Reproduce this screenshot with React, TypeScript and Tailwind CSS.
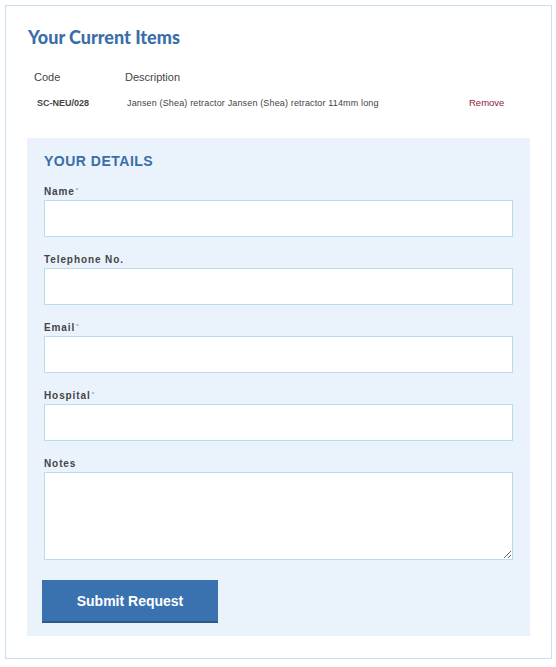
import React from 'react';

interface FieldProps {
  label: string;
  required?: boolean;
  multiline?: boolean;
}

const Field: React.FC<FieldProps> = ({ label, required, multiline }) => (
  <div className="mb-[14px]">
    <label className="block text-[10px] leading-[17px] font-bold tracking-[0.9px] text-[#454545]">
      {label}
      {required && <sup className="text-[6px] text-[#9a9a9a] ml-[1px]">*</sup>}
    </label>
    {multiline ? (
      <textarea className="block w-full h-[88px] bg-white border border-[#b7dcee] outline-none resize-y" />
    ) : (
      <input type="text" className="block w-full h-[37px] bg-white border border-[#b7dcee] outline-none" />
    )}
  </div>
);

export default function App() {
  return (
    <div className="bg-white w-[556px] h-[667px] pt-[5px] pl-[5px]" style={{ fontFamily: '"Liberation Sans", Arial, sans-serif' }}>
      <div className="w-[547px] h-[654px] border border-[#c7e0ef] pt-[19px]">
        {/* Current items */}
        <h2
          className="pl-[22px] text-[18px] leading-[24px] font-black text-[#3a6ea8]"
          style={{ fontFamily: 'Lato, "Liberation Sans", sans-serif' }}
        >
          Your Current Items
        </h2>

        <div className="mt-[21px] flex pl-[28px] text-[11px] leading-[14px] text-[#444]">
          <div className="w-[91px]">Code</div>
          <div>Description</div>
        </div>

        <div className="mt-[13px] flex items-center pl-[31px] text-[9px] leading-[12px] text-[#444]">
          <div className="w-[90px] font-bold">SC-NEU/028</div>
          <div className="w-[342px] tracking-[0.15px]">Jansen (Shea) retractor Jansen (Shea) retractor 114mm long</div>
          <div className="text-[#8b1c3c] text-[9.5px]">Remove</div>
        </div>

        {/* Details form */}
        <div className="mt-[29px] ml-[21px] w-[503px] bg-[#eaf3fc] pt-[14px] pl-[17px] pr-[17px] pb-[13px]">
          <h3 className="text-[14px] leading-[18px] font-bold tracking-[0.5px] text-[#3a6ea8] mb-[13px]">
            YOUR DETAILS
          </h3>
          <Field label="Name" required />
          <Field label="Telephone No." />
          <Field label="Email" required />
          <Field label="Hospital" required />
          <Field label="Notes" multiline />
          <button
            type="button"
            className="mt-[6px] -ml-[2px] w-[176px] h-[43px] pt-[2px] bg-[#3a72b0] border-b-2 border-[#2d5a8a] text-white text-[14px] font-bold"
          >
            Submit Request
          </button>
        </div>
      </div>
    </div>
  );
}
